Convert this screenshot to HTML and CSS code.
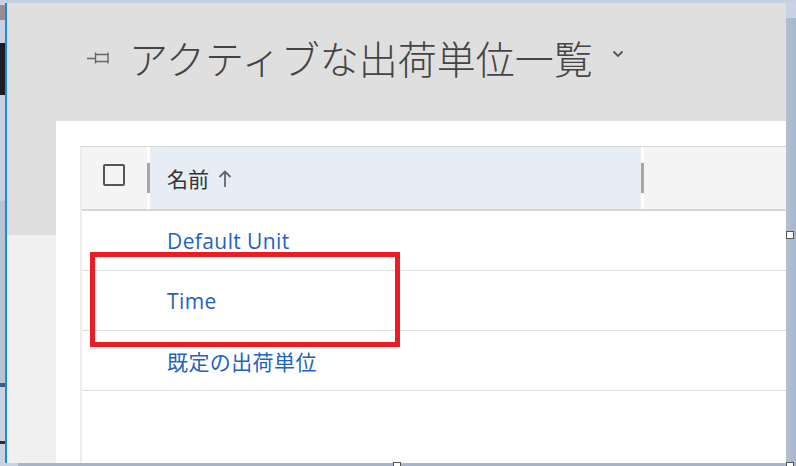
FILE: index.html
```html
<!DOCTYPE html>
<html lang="ja">
<head>
<meta charset="utf-8">
<link rel="stylesheet" href="styles.css">
</head>
<body>
<div class="screen">
  <div class="topstrip"></div>
  <div class="middle">
    <div class="leftedge"></div>
    <div class="window">
      <div class="header">
        <svg class="pin" width="24" height="12" viewBox="0 0 24 12"><path d="M0 6.5H8.5M8.5 0.5V11.5M8.5 2.5H21M8.5 9.5H21M21 0.5V11.5" stroke="#666" stroke-width="1.4" fill="none"/></svg>
        <h1 class="title">アクティブな出荷単位一覧</h1>
        <svg class="chev" width="12" height="8" viewBox="0 0 12 8"><path d="M1.5 1.5L6 6L10.5 1.5" stroke="#555" stroke-width="1.8" fill="none"/></svg>
      </div>
      <div class="body">
        <div class="gutter"></div>
        <div class="main">
          <div class="grid">
            <div class="headrow">
              <div class="cbcell"><span class="checkbox"></span></div>
              <span class="divider"></span>
              <div class="namecol">名前<svg class="arrow" width="14" height="17" viewBox="0 0 14 17"><path d="M7 1.5V17M1.5 7L7 1.5L12.5 7" stroke="#666" stroke-width="1.8" fill="none"/></svg></div>
              <span class="divider"></span>
              <div class="restcol"></div>
            </div>
            <div class="row"><a class="link">Default Unit</a></div>
            <div class="row"><a class="link">Time</a></div>
            <div class="row"><a class="link">既定の出荷単位</a></div>
          </div>
        </div>
      </div>
    </div>
    <div class="rightedge"><div class="rtop"></div></div>
  </div>
  <div class="bottomstrip"></div>
  <div class="redbox"></div>
  <span class="handle h-right"></span>
  <span class="handle h-bottom"></span>
  <span class="handle h-corner"></span>
</div>
</body>
</html>
```

FILE: styles.css
```css
* { box-sizing: border-box; }
html, body { margin: 0; padding: 0; }
body {
  width: 796px;
  height: 466px;
  overflow: hidden;
  background: #c7d1e0;
  font-family: "Open Sans", "Noto Sans CJK JP", sans-serif;
}
.screen {
  position: relative;
  width: 796px;
  height: 466px;
  display: flex;
  flex-direction: column;
}
.topstrip { height: 3px; background: #c5cfdf; }
.middle { display: flex; height: 460px; }
.leftedge {
  width: 5px;
  background: linear-gradient(to bottom,
    #c8d2e0 0 2px, #9c8c8c 2px 17px, #c8d2e0 17px 40px,
    #1d1d24 40px 92px, #c8d2e0 92px 198px, #b8c4d4 198px 380px,
    #3b5b8c 380px 384px, #c8d2e0 384px 438px, #2a2a30 438px 441px, #c8d2e0 441px);
}
.window {
  width: 781px;
  border-left: 2px solid #1e88e5;
  display: flex;
  flex-direction: column;
  background: #fff;
}
.rightedge {
  width: 10px;
  background: linear-gradient(to right, #b3bfd1, #a9b6ca);
}
.rtop { height: 15px; background: #c8d3e3; }
.bottomstrip {
  height: 3px;
  background: linear-gradient(to right, #c8d2e0 0 18px, #aab4c8 18px);
}
.header {
  height: 118px;
  background: #dfdfdf;
  display: flex;
  align-items: center;
  padding: 0 0 10px 80px;
}
.pin { flex: none; margin-top: 2px; }
.title {
  margin: 0 0 0 18px;
  font-family: "Noto Sans CJK JP", sans-serif;
  font-weight: 300;
  font-size: 39px;
  line-height: 52px;
  color: #444;
}
.chev { margin-left: 19px; margin-top: -6px; }
.body { flex: 1; display: flex; }
.gutter {
  width: 49px;
  background: linear-gradient(to bottom, #dfdfdf 0 114px, #f0f0f0 114px);
}
.main {
  flex: 1;
  background: #fff;
  padding: 25px 0 0 24px;
}
.grid {
  height: 100%;
  border-left: 2px solid #ececec;
  border-top: 1px solid #d6d6d6;
}
.headrow {
  display: flex;
  height: 64px;
  border-bottom: 2px solid #d6d6d6;
  align-items: stretch;
}
.cbcell {
  width: 65px;
  background: #f4f4f4;
  display: flex;
  align-items: center;
  padding-left: 21px;
  padding-bottom: 6px;
}
.checkbox {
  width: 22px;
  height: 22px;
  border: 2px solid #555;
  border-radius: 2px;
  background: #fff0;
}
.divider {
  width: 3px;
  height: 30px;
  align-self: center;
  background: #a6a6a6;
}
.namecol {
  width: 491px;
  background: #e6edf5;
  display: flex;
  align-items: center;
  padding-left: 17px;
  font-size: 21px;
  color: #333;
  font-family: "Noto Sans CJK JP", sans-serif;
}
.arrow { margin-left: 9px; }
.restcol { flex: 1; background: #f4f4f4; }
.row {
  height: 60px;
  border-bottom: 1px solid #dedede;
  display: flex;
  align-items: center;
  padding-left: 85px;
}
.link {
  font-size: 21px;
  letter-spacing: 0.4px;
  color: #1f62c0;
}
.redbox {
  position: absolute;
  left: 90px;
  top: 252px;
  width: 310px;
  height: 95px;
  border: 5px solid #ed1c24;
}
.handle {
  position: absolute;
  width: 8px;
  height: 8px;
  background: #fff;
  border: 1.5px solid #555;
}
.h-right { left: 786px; top: 231px; }
.h-bottom { left: 393px; top: 462px; }
.h-corner { left: 786px; top: 462px; }
```
